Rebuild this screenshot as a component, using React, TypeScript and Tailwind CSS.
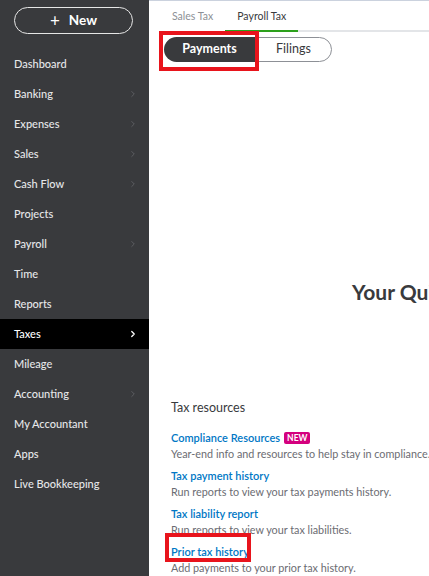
import { ChevronRight } from 'lucide-react';

const NAV: { label: string; arrow?: boolean; active?: boolean }[] = [
  { label: 'Dashboard' },
  { label: 'Banking', arrow: true },
  { label: 'Expenses', arrow: true },
  { label: 'Sales', arrow: true },
  { label: 'Cash Flow', arrow: true },
  { label: 'Projects' },
  { label: 'Payroll', arrow: true },
  { label: 'Time' },
  { label: 'Reports' },
  { label: 'Taxes', arrow: true, active: true },
  { label: 'Mileage' },
  { label: 'Accounting', arrow: true },
  { label: 'My Accountant' },
  { label: 'Apps' },
  { label: 'Live Bookkeeping' },
];

const RESOURCES = [
  { title: 'Compliance Resources', desc: 'Year-end info and resources to help stay in compliance.', isNew: true },
  { title: 'Tax payment history', desc: 'Run reports to view your tax payments history.' },
  { title: 'Tax liability report', desc: 'Run reports to view your tax liabilities.' },
  { title: 'Prior tax history', desc: 'Add payments to your prior tax history.', marked: true },
];

function Sidebar() {
  return (
    <aside className="w-[149px] shrink-0 bg-[#393a3d] h-[576px] flex flex-col">
      <div className="px-[14px] pt-[7px]">
        <button className="w-[119px] h-[27px] rounded-full border border-[#e6e6e6] text-white flex items-center justify-center gap-[9px] text-[13.5px] font-bold">
          <span className="text-[17px] font-normal leading-none -mt-[1px]">+</span>
          <span>New</span>
        </button>
      </div>
      <nav className="mt-[15px] flex flex-col">
        {NAV.map((item) => (
          <div
            key={item.label}
            className={`h-[30px] flex items-center justify-between pl-[14px] pr-[11px] text-[11px] font-medium ${
              item.active ? 'bg-black text-white' : 'text-[#e6e7e9]'
            }`}
          >
            <span>{item.label}</span>
            {item.arrow && (
              <ChevronRight
                size={10}
                strokeWidth={item.active ? 3 : 1.5}
                className={item.active ? 'text-white' : 'text-[#6e7075]'}
              />
            )}
          </div>
        ))}
      </nav>
    </aside>
  );
}

export default function App() {
  return (
    <div
      className="w-[429px] h-[576px] flex overflow-hidden bg-white"
      style={{ fontFamily: 'Lato, "Open Sans", sans-serif' }}
    >
      <Sidebar />
      <main className="flex-1 min-w-0 border-t border-[#cbd2de] overflow-hidden">
        {/* tabs */}
        <div className="flex h-[31px] pl-[11px]">
          <div className="px-[12px] flex items-center text-[10.5px] text-[#8d9096] pt-[1px]">Sales Tax</div>
          <div className="px-[12px] flex items-center text-[10.5px] text-[#393a3d] border-b-2 border-[#2ca01c] pt-[3px]">
            Payroll Tax
          </div>
          <div className="flex-1 border-b-2 border-[#e3e5e8]" />
        </div>

        {/* segmented control */}
        <div className="relative mt-[5px] ml-[15px] flex h-[25px]">
          <div className="w-[91px] h-full rounded-l-full bg-[#393a3d] text-white text-[12.5px] font-bold flex items-center justify-center">
            Payments
          </div>
          <div className="w-[77px] h-full rounded-r-full border border-[#8d9096] text-[#393a3d] text-[12.5px] flex items-center justify-center">
            Filings
          </div>
          <div className="absolute left-[-5px] top-[-6px] w-[100px] h-[40px] border-[4px] border-[#e8141c]" />
        </div>

        {/* heading */}
        <div className="mt-[218px] pl-[203px] whitespace-nowrap text-[21px] font-bold text-[#393a3d] leading-[24px]">
          Your QuickBooks Payroll taxes
        </div>

        {/* tax resources */}
        <section className="mt-[96px] pl-[22px] whitespace-nowrap">
          <h2 className="text-[12.5px] text-[#393a3d] leading-[16px]">Tax resources</h2>
          <div className="mt-[14px] flex flex-col gap-[6px]">
            {RESOURCES.map((r) => (
              <div key={r.title} className="flex flex-col">
                <div className="flex items-center gap-[4px] h-[16px]">
                  <span className="relative text-[11px] font-semibold text-[#0077c5]">
                    {r.title}
                    {r.marked && (
                      <span className="absolute left-[-6px] top-[-11px] w-[86px] h-[29px] border-[4px] border-[#e8141c]" />
                    )}
                  </span>
                  {r.isNew && (
                    <span className="bg-[#d4007e] text-white text-[8.5px] font-bold px-[3px] rounded-[2px] leading-[12px]">
                      NEW
                    </span>
                  )}
                </div>
                <div className="text-[10.8px] text-[#6b6c72] leading-[16px]">{r.desc}</div>
              </div>
            ))}
          </div>
        </section>
      </main>
    </div>
  );
}
